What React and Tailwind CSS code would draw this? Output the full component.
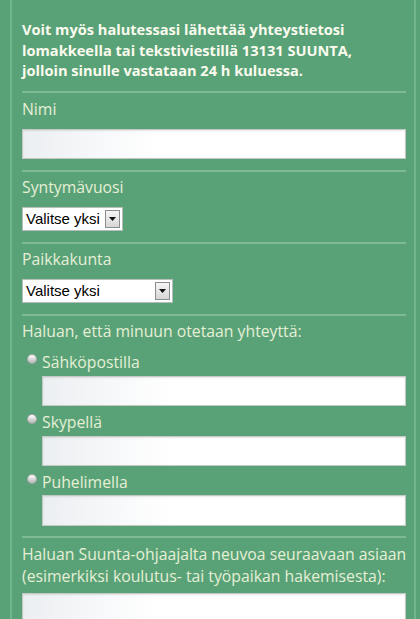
import React from 'react';

const Separator = ({ className = '' }) => (
  <div className={`h-[2px] bg-[#7dba95] ${className}`}></div>
);

const TextInput = ({ className = '' }) => (
  <div
    className={`h-[30px] border border-[#c4c9c6] shadow-[inset_0_1px_2px_rgba(0,0,0,0.1)] bg-linear-to-r from-[#eceff2] from-0% to-white to-35% ${className}`}
  ></div>
);

const SelectBox = ({ width, className = '' }) => (
  <div
    className={`h-[24px] ${width} bg-white border border-[#b9bdba] flex items-center justify-between pl-[3px] pr-[2px] ${className}`}
  >
    <span className="text-[15px] leading-none text-black font-['Liberation_Sans',Arial,sans-serif]">
      Valitse yksi
    </span>
    <div className="w-[15px] h-[18px] border border-[#8d8d8d] bg-linear-to-b from-[#f5f5f5] to-[#d6d6d6] flex items-center justify-center">
      <svg width="7" height="4" viewBox="0 0 7 4">
        <path d="M0 0 L7 0 L3.5 4 Z" fill="#111" />
      </svg>
    </div>
  </div>
);

const RadioRow = ({ label, className = '' }) => (
  <div className={`h-[20px] flex items-center ${className}`}>
    <div className="w-[16px] flex justify-center -mt-[5px] ml-[2px]">
      <div className="w-[10px] h-[10px] rounded-full border border-[#a9aca9] bg-linear-to-b from-[#ffffff] to-[#b5b8b6]"></div>
    </div>
    <span className="ml-[2px] text-[15.75px] leading-[20px] text-[#e6efd6]">{label}</span>
  </div>
);

const App = () => {
  return (
    <div className="w-[420px] h-[619px] overflow-hidden bg-[#59a277] pl-[10px] pr-[4px] font-['Open_Sans','Lato',sans-serif]">
      <div className="h-full border-l-2 border-r-2 border-[#72b48d] pl-[10px] pr-[8px]">
        {/* Intro */}
        <p className="pt-[19px] text-[14.6px] leading-[20.5px] font-bold text-[#fbfbef] whitespace-nowrap">
          Voit myös halutessasi lähettää yhteystietosi
          <br />
          lomakkeella tai tekstiviestillä 13131 SUUNTA,
          <br />
          jolloin sinulle vastataan 24 h kuluessa.
        </p>

        <Separator className="mt-[10px]" />
        <div className="mt-[6px] text-[15.75px] leading-[20px] text-[#e6efd6]">Nimi</div>
        <TextInput className="mt-[10px]" />

        <Separator className="mt-[11px]" />
        <div className="mt-[5px] text-[15.75px] leading-[20px] text-[#e6efd6]">Syntymävuosi</div>
        <SelectBox width="w-[101px]" className="mt-[10px]" />

        <Separator className="mt-[11px]" />
        <div className="mt-[5px] text-[15.75px] leading-[20px] text-[#e6efd6]">Paikkakunta</div>
        <SelectBox width="w-[151px]" className="mt-[10px]" />

        <Separator className="mt-[11px]" />
        <div className="mt-[5px] text-[15.75px] leading-[20px] text-[#e6efd6]">
          Haluan, että minuun otetaan yhteyttä:
        </div>

        <RadioRow label="Sähköpostilla" className="mt-[11px]" />
        <TextInput className="mt-[4px] ml-[20px]" />
        <RadioRow label="Skypellä" className="mt-[6px]" />
        <TextInput className="mt-[4px] ml-[20px]" />
        <RadioRow label="Puhelimella" className="mt-[6px]" />
        <TextInput className="mt-[3px] ml-[20px] h-[31px]" />

        <Separator className="mt-[10px]" />
        <div className="mt-[5px] text-[15.75px] leading-[22px] text-[#e6efd6] whitespace-nowrap">
          Haluan Suunta-ohjaajalta neuvoa seuraavaan asiaan
          <br />
          (esimerkiksi koulutus- tai työpaikan hakemisesta):
        </div>
        <TextInput className="mt-[6px] h-[80px]" />
      </div>
    </div>
  );
};

export default App;
